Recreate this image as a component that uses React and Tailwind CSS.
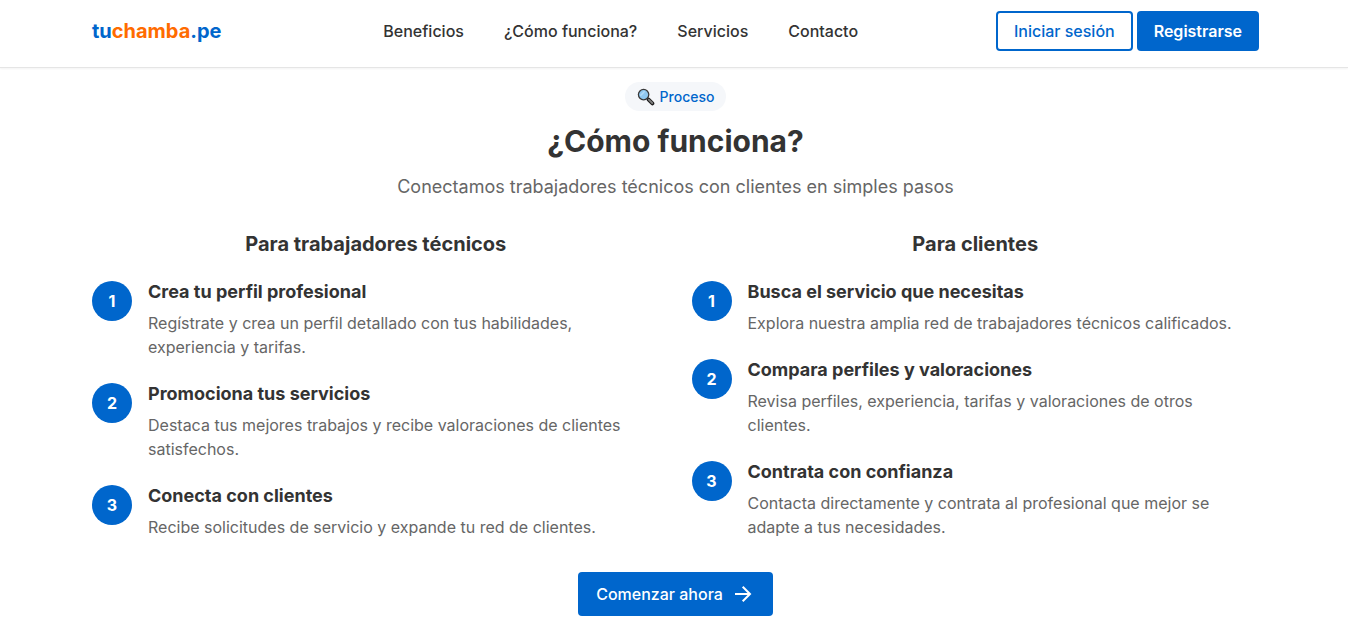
const groups = [
  {
    title: 'Para trabajadores técnicos',
    steps: [
      ['Crea tu perfil profesional', 'Regístrate y crea un perfil detallado con tus habilidades, experiencia y tarifas.'],
      ['Promociona tus servicios', 'Destaca tus mejores trabajos y recibe valoraciones de clientes satisfechos.'],
      ['Conecta con clientes', 'Recibe solicitudes de servicio y expande tu red de clientes.'],
    ],
  },
  {
    title: 'Para clientes',
    steps: [
      ['Busca el servicio que necesitas', 'Explora nuestra amplia red de trabajadores técnicos calificados.'],
      ['Compara perfiles y valoraciones', 'Revisa perfiles, experiencia, tarifas y valoraciones de otros clientes.'],
      ['Contrata con confianza', 'Contacta directamente y contrata al profesional que mejor se adapte a tus necesidades.'],
    ],
  },
];

const links = [
  ['Beneficios', '#beneficios'],
  ['¿Cómo funciona?', '#como-funciona'],
  ['Servicios', '#servicios'],
  ['Contacto', '#contacto'],
];

function SearchIcon() {
  return (
    <svg viewBox="0 0 18 18" className="size-[18px]" fill="none" aria-hidden="true">
      <path d="M9.6 9.6 12 12" stroke="#222" strokeWidth="1.8" />
      <path d="M11.6 11.6 15.4 15.4" stroke="#1c1c1c" strokeWidth="3.8" strokeLinecap="round" />
      <path d="M11.8 11.6 15.2 15" stroke="#808080" strokeWidth="1.8" strokeLinecap="round" />
      <circle cx="6.6" cy="6.6" r="5.2" fill="#8fc8f0" stroke="#3a3a3a" strokeWidth="1.3" />
      <path d="M3.8 7.2 7.2 3.8" stroke="#b4dcf8" strokeWidth="1.6" strokeLinecap="round" />
    </svg>
  );
}

function ArrowIcon() {
  return (
    <svg viewBox="0 0 24 24" className="size-6" fill="none" stroke="currentColor" strokeWidth="2" strokeLinecap="butt" strokeLinejoin="miter" aria-hidden="true">
      <path d="M4 12h15M11.7 4.7 19 12l-7.3 7.3" />
    </svg>
  );
}

function Step({ number, title, text }) {
  return (
    <li className="flex gap-4">
      <span className="flex size-10 shrink-0 items-center justify-center rounded-full bg-[#0066cc] font-bold text-white">{number}</span>
      <div>
        <h4 className="mb-2 text-lg leading-[22px] font-bold">{title}</h4>
        <p className="text-base text-[#666]">{text}</p>
      </div>
    </li>
  );
}

export default function App() {
  return (
    <div className="bg-white font-['Inter',sans-serif] text-[#333]">
      <header className="border-b border-[#e5e5e5] shadow-xs">
        <div className="mx-auto flex max-w-[1200px] items-start justify-between pt-[11px] pr-[15px] pb-4 pl-[18px]">
          <a href="#inicio" className="flex h-10 items-center text-xl font-bold text-[#0066cc]">
            <span>tu<span className="text-[#ff6b00]">chamba</span>.pe</span>
          </a>
          <nav className="ml-6 flex h-10 items-center gap-10 font-medium">
            {links.map(([label, href]) => <a key={href} href={href}>{label}</a>)}
          </nav>
          <div className="flex gap-1">
            <button className="h-10 rounded border-2 border-[#0066cc] px-4 font-medium text-[#0066cc]">Iniciar sesión</button>
            <button className="h-10 rounded bg-[#0066cc] px-[17px] font-semibold text-white">Registrarse</button>
          </div>
        </div>
      </header>
      <main className="mx-auto flex max-w-[1200px] flex-col items-center pt-[14px] pr-[15px] pb-3 pl-[18px]">
        <span className="flex h-[29px] items-center gap-[5px] rounded-full bg-[#f5f7fa] px-3 text-sm font-medium text-[#0066cc]">
          <SearchIcon />
          Proceso
        </span>
        <h2 className="mt-3 text-[30px] leading-9 font-bold">¿Cómo funciona?</h2>
        <p className="mt-[14px] text-lg text-[#666]">Conectamos trabajadores técnicos con clientes en simples pasos</p>
        <div className="mt-8 grid w-full grid-cols-2 gap-8">
          {groups.map((group) => (
            <section key={group.title}>
              <h3 className="mb-[26px] text-center text-xl leading-[22px] font-bold">{group.title}</h3>
              <ol className="flex flex-col gap-6">
                {group.steps.map(([title, text], i) => <Step key={title} number={i + 1} title={title} text={text} />)}
              </ol>
            </section>
          ))}
        </div>
        <a href="#registro" className="mt-[33px] flex h-11 items-center gap-2 rounded bg-[#0066cc] px-[18px] font-medium text-white">
          Comenzar ahora
          <ArrowIcon />
        </a>
      </main>
    </div>
  );
}
